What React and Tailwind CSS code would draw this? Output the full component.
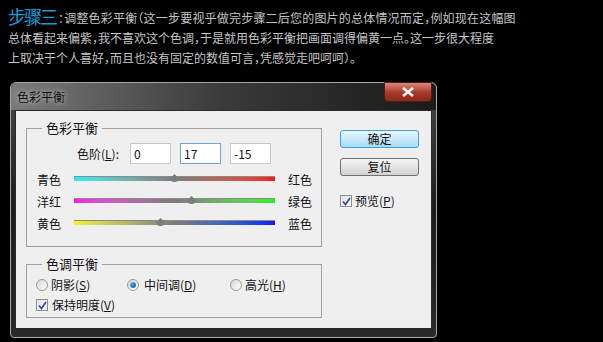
import React from 'react';

const font = { fontFamily: '"Noto Sans CJK SC", "Noto Sans", sans-serif' };

function Thumb({ left }) {
  return (
    <svg className="absolute top-[7px]" style={{ left: left - 4 }} width="9" height="8" viewBox="0 0 9 8">
      <path d="M4.5 0 L8.5 4 Q9 8 4.5 8 Q0 8 0.5 4 Z" fill="#7c7c7c" />
    </svg>
  );
}

function SliderRow({ left, right, gradient, pos }) {
  return (
    <div className="flex items-center h-[22px]">
      <span className="w-[47px] pl-[10px] pt-[3px]">{left}</span>
      <div className="relative w-[201px] h-[22px] flex items-center">
        <div className={`w-full h-[5px] border-t border-[#8a8a8a] ${gradient}`} />
        <Thumb left={pos} />
      </div>
      <span className="ml-[13px] pt-[3px]">{right}</span>
    </div>
  );
}

function Radio({ checked }) {
  return (
    <span className="w-[12px] h-[12px] rounded-full border border-[#9a9a9a] bg-gradient-to-br from-[#d8d8d8] to-white flex items-center justify-center">
      {checked && <span className="w-[6px] h-[6px] rounded-full bg-gradient-to-br from-[#5fc4f0] to-[#0c5a8a]" />}
    </span>
  );
}

function Check() {
  return (
    <span className="w-[12px] h-[12px] border border-[#8e8f8f] bg-gradient-to-br from-[#e0e0e0] to-white flex items-center justify-center">
      <svg width="9" height="9" viewBox="0 0 9 9">
        <path d="M1 4.5 L3.5 7.5 L8 1" stroke="#2b4cb0" strokeWidth="1.7" fill="none" />
      </svg>
    </span>
  );
}

export default function App() {
  return (
    <div className="w-[603px] h-[342px] bg-black overflow-hidden" style={font}>
      <div className="pl-[8px] pt-[4px] text-[12px] leading-[20px] text-[#c4c4c4] [font-feature-settings:'halt']">
        <div className="flex items-end h-[24px]">
          <span className="text-[18px] tracking-[-2px] leading-[24px] text-[#1d9ad8]">步骤三</span>
          <span className="ml-[2px] tracking-[0.2px]">：调整色彩平衡（这一步要视乎做完步骤二后您的图片的总体情况而定，例如现在这幅图</span>
        </div>
        <div>总体看起来偏紫，我不喜欢这个色调，于是就用色彩平衡把画面调得偏黄一点。这一步很大程度</div>
        <div>上取决于个人喜好，而且也没有固定的数值可言，凭感觉走吧呵呵）。</div>
      </div>

      <div className="ml-[10px] mt-[14px] w-[427px] h-[256px] rounded-t-[6px] rounded-b-[4px] border border-[#a8a8a8] bg-gradient-to-b from-[#4a4a4a] via-[#1c1c1c] to-[#2a2a2a] flex flex-col">
        <div className="h-[27px] flex justify-between bg-gradient-to-r from-[#7a7a7a] via-[#3a3a3a] to-[#1a1a1a] rounded-t-[6px]">
          <span className="pl-[6px] pt-[5px] text-[12px] leading-[18px] text-[#111] [text-shadow:0_0_6px_#ddd]">色彩平衡</span>
          <div className="mr-[4px] -mt-px w-[48px] h-[20px] rounded-b-[4px] border border-[#5a1a12] bg-gradient-to-b from-[#d48a80] via-[#b03a2a] to-[#862a1c] flex items-center justify-center">
            <svg width="14" height="10" viewBox="0 0 14 10">
              <path d="M2 1 L12 9 M12 1 L2 9" stroke="#f2f2f2" strokeWidth="2.6" />
            </svg>
          </div>
        </div>

        <div className="mx-[4px] mb-[8px] flex-1 border border-[#2a2a2a] bg-[#efefef] text-[12px] text-[#111] flex">
          <div className="pl-[10px] pt-[9px] w-[323px]">
            <fieldset className="w-[296px] h-[127px] border border-[#a0a0a0]">
              <legend className="ml-[15px] px-[4px] leading-[16px] text-[13px]">色彩平衡</legend>
              <div className="flex items-center mt-[7px] h-[21px]">
                <span className="ml-[50px] w-[53px] text-[12px]">色阶(<span className="underline">L</span>):</span>
                <div className="w-[41px] h-[21px] border border-[#c8c8c8] bg-white pl-[3px] leading-[19px]">0</div>
                <div className="ml-[9px] w-[41px] h-[21px] border border-[#6ca6d6] bg-white pl-[3px] leading-[19px]">17</div>
                <div className="ml-[9px] w-[41px] h-[21px] border border-[#c8c8c8] bg-white pl-[3px] leading-[19px]">-15</div>
              </div>
              <div className="mt-[3px]">
                <SliderRow left="青色" right="红色" pos={100} gradient="bg-gradient-to-r from-[#16f0f4] via-[#7c7c7c] to-[#f51414]" />
                <SliderRow left="洋红" right="绿色" pos={117} gradient="bg-gradient-to-r from-[#f514f0] via-[#7c7c7c] to-[#14f514]" />
                <SliderRow left="黄色" right="蓝色" pos={86} gradient="bg-gradient-to-r from-[#f5f514] via-[#7c7c7c] to-[#1414f5]" />
              </div>
            </fieldset>
            <fieldset className="mt-[9px] w-[296px] h-[62px] border border-[#a0a0a0]">
              <legend className="ml-[15px] px-[4px] leading-[16px] text-[13px]">色调平衡</legend>
              <div className="flex items-center h-[20px] mt-[3px] pl-[9px]">
                <Radio />
                <span className="ml-[3px] w-[76px]">阴影(<span className="underline">S</span>)</span>
                <Radio checked />
                <span className="ml-[5px] w-[86px]">中间调(<span className="underline">D</span>)</span>
                <Radio />
                <span className="ml-[3px]">高光(<span className="underline">H</span>)</span>
              </div>
              <div className="flex items-center h-[20px] pl-[9px]">
                <Check />
                <span className="ml-[4px]">保持明度(<span className="underline">V</span>)</span>
              </div>
            </fieldset>
          </div>
          <div className="pl-[1px] pt-[19px] flex flex-col">
            <button className="w-[79px] h-[18px] rounded-[3px] border border-[#3c9fd8] bg-gradient-to-b from-[#eaf6fd] to-[#a9dbf6] text-[12px] leading-[16px] text-[#111]">确定</button>
            <button className="mt-[10px] w-[79px] h-[18px] rounded-[3px] border border-[#707070] bg-gradient-to-b from-[#f4f4f4] to-[#d4d4d4] text-[12px] leading-[16px] text-[#111]">复位</button>
            <div className="mt-[16px] flex items-center">
              <Check />
              <span className="ml-[3px]">预览(<span className="underline">P</span>)</span>
            </div>
          </div>
        </div>
      </div>
    </div>
  );
}
